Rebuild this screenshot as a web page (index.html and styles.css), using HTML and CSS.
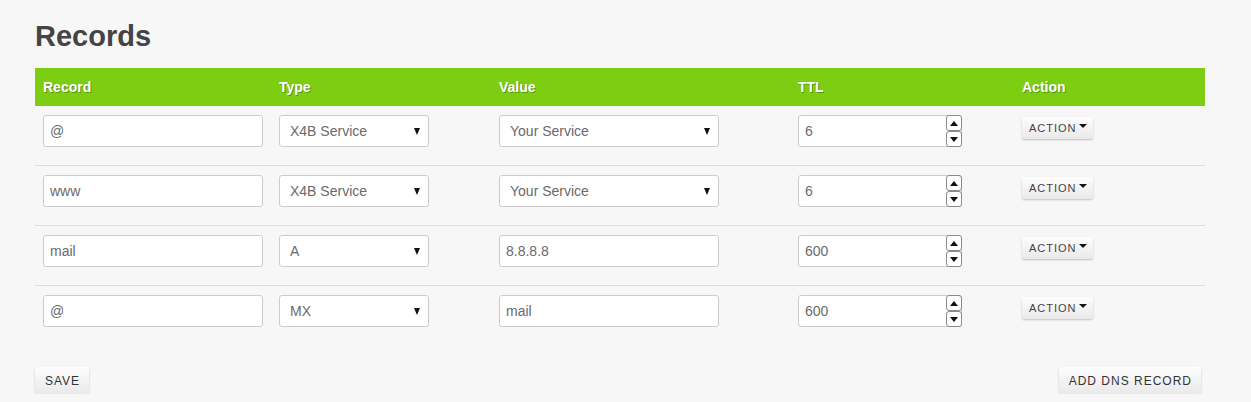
FILE: index.html
```html
<!DOCTYPE html>
<html>
<head>
<meta charset="utf-8">
<link rel="stylesheet" href="styles.css">
</head>
<body>
<div class="page">
  <h1 class="title">Records</h1>
  <table class="records">
    <colgroup>
      <col class="c-record"><col class="c-type"><col class="c-value"><col class="c-ttl"><col class="c-action">
    </colgroup>
    <thead>
      <tr><th>Record</th><th>Type</th><th>Value</th><th>TTL</th><th>Action</th></tr>
    </thead>
    <tbody>
      <tr>
        <td><input class="field w220" value="@"></td>
        <td><div class="select w150"><span>X4B Service</span><i class="arrow"></i></div></td>
        <td><div class="select w220"><span>Your Service</span><i class="arrow"></i></div></td>
        <td><div class="num"><input class="num-input" value="6"><div class="spin"><span class="up"></span><span class="down"></span></div></div></td>
        <td><button class="btn btn-sm">Action <i class="caret"></i></button></td>
      </tr>
      <tr>
        <td><input class="field w220" value="www"></td>
        <td><div class="select w150"><span>X4B Service</span><i class="arrow"></i></div></td>
        <td><div class="select w220"><span>Your Service</span><i class="arrow"></i></div></td>
        <td><div class="num"><input class="num-input" value="6"><div class="spin"><span class="up"></span><span class="down"></span></div></div></td>
        <td><button class="btn btn-sm">Action <i class="caret"></i></button></td>
      </tr>
      <tr>
        <td><input class="field w220" value="mail"></td>
        <td><div class="select w150"><span>A</span><i class="arrow"></i></div></td>
        <td><input class="field w220" value="8.8.8.8"></td>
        <td><div class="num"><input class="num-input" value="600"><div class="spin"><span class="up"></span><span class="down"></span></div></div></td>
        <td><button class="btn btn-sm">Action <i class="caret"></i></button></td>
      </tr>
      <tr class="last">
        <td><input class="field w220" value="@"></td>
        <td><div class="select w150"><span>MX</span><i class="arrow"></i></div></td>
        <td><input class="field w220" value="mail"></td>
        <td><div class="num"><input class="num-input" value="600"><div class="spin"><span class="up"></span><span class="down"></span></div></div></td>
        <td><button class="btn btn-sm">Action <i class="caret"></i></button></td>
      </tr>
    </tbody>
  </table>
  <div class="footer">
    <button class="btn">Save</button>
    <button class="btn">Add DNS Record</button>
  </div>
</div>
</body>
</html>
```

FILE: styles.css
```css
* { box-sizing: border-box; }
html, body { margin: 0; padding: 0; background: #f7f7f7; }
body { font-family: "Liberation Sans", Arial, Helvetica, sans-serif; color: #333; }
.page { padding: 20px 46px 0 35px; width: 1251px; }
.title { margin: 0 0 16px; font-size: 29px; line-height: 32px; font-weight: bold; color: #444; }
.records { width: 1170px; border-collapse: collapse; table-layout: fixed; }
.c-record { width: 236px; } .c-type { width: 220px; } .c-value { width: 299px; } .c-ttl { width: 224px; } .c-action { width: 191px; }
.records thead th { background: #7dce12; color: #fff; text-align: left; font-size: 14px; font-weight: bold; height: 38px; padding: 0 8px; text-shadow: 1px 1px 0 rgba(60,90,20,.5); }
.records tbody td { padding: 9px 8px 18px; vertical-align: top; border-bottom: 1px solid #ddd; }
.records tbody tr.last td { border-bottom: none; }
.field { display: block; height: 32px; border: 1px solid #ccc; border-radius: 3px; background: #fff; padding: 0 6px; font: 14px "Liberation Sans", Arial, sans-serif; color: #6a6a6a; outline: none; }
.w220 { width: 220px; } .w150 { width: 150px; }
.select { display: flex; align-items: center; justify-content: space-between; height: 32px; border: 1px solid #ccc; border-radius: 3px; background: #fff; padding: 0 8px 0 10px; font-size: 14px; color: #6a6a6a; }
.arrow { width: 0; height: 0; border-left: 3.5px solid transparent; border-right: 3.5px solid transparent; border-top: 7px solid #111; margin-top: 1px; }
.num { display: flex; width: 164px; height: 32px; border: 1px solid #ccc; border-radius: 3px; background: #fff; }
.num-input { flex: 1; min-width: 0; border: none; background: transparent; padding: 0 6px; font: 14px "Liberation Sans", Arial, sans-serif; color: #6a6a6a; outline: none; }
.spin { display: flex; flex-direction: column; width: 16px; margin: -1px -1px -1px 0; }
.spin span { flex: 1; border: 1px solid #8a8a8a; border-radius: 3px; background: #fff; display: flex; align-items: center; justify-content: center; }
.spin .up::before { content: ""; border-left: 4px solid transparent; border-right: 4px solid transparent; border-bottom: 5px solid #111; }
.spin .down::before { content: ""; border-left: 4px solid transparent; border-right: 4px solid transparent; border-top: 5px solid #111; }
.btn { border: none; border-radius: 2px; background: linear-gradient(#fdfdfd, #e9e9e9); box-shadow: 0 1px 2px rgba(0,0,0,.22); font: 12px "Liberation Sans", Arial, sans-serif; text-transform: uppercase; letter-spacing: 1px; color: #333; height: 27px; padding: 0 9px 0 10px; cursor: pointer; }
.btn-sm { font-size: 11px; height: 22px; padding: 0 6px 0 7px; margin-top: 2px; display: inline-flex; align-items: center; gap: 2px; color: #444; }
.caret { display: inline-block; width: 0; height: 0; border-left: 4px solid transparent; border-right: 4px solid transparent; border-top: 4px solid #111; margin-top: -5px; }
.footer { display: flex; justify-content: space-between; width: 1166px; margin-top: 22px; }
```
